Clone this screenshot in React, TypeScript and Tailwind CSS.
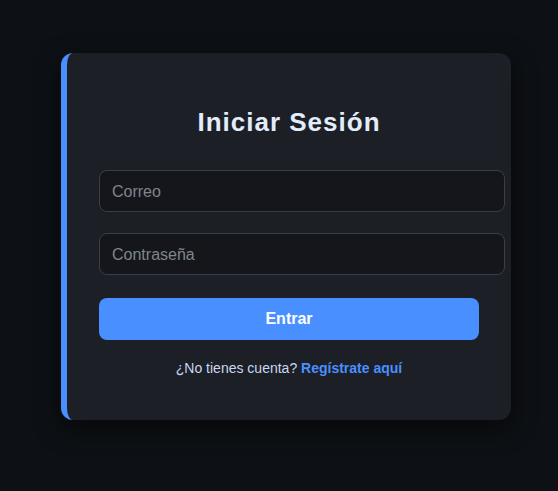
import { useState } from "react";

const Login = () => {
  const [email, setEmail] = useState("");
  const [password, setPassword] = useState("");

  return (
    <div className="w-[450px] rounded-xl border-l-[6px] border-[#4a8fff] bg-[#1c1f26] px-8 pt-[54px] pb-[42px] shadow-[0_8px_24px_rgba(0,0,0,0.5)]">
      <h2 className="text-center text-[26px] font-bold leading-[30px] tracking-[1px] text-[#e3ecfa]">
        Iniciar Sesión
      </h2>

      <form
        className="mt-[33px] flex flex-col"
        onSubmit={(e) => e.preventDefault()}
      >
        <input
          type="email"
          placeholder="Correo"
          value={email}
          onChange={(e) => setEmail(e.target.value)}
          className="box-content h-[18px] w-full rounded-lg border border-[#3a3f47] bg-[#14161b] px-3 pt-[12px] pb-[10px] text-base text-[#e6edf3] placeholder-[#80858d] outline-none"
        />
        <input
          type="password"
          placeholder="Contraseña"
          value={password}
          onChange={(e) => setPassword(e.target.value)}
          className="mt-[21px] box-content h-[18px] w-full rounded-lg border border-[#3a3f47] bg-[#14161b] px-3 pt-[12px] pb-[10px] text-base text-[#e6edf3] placeholder-[#80858d] outline-none"
        />
        <button
          type="submit"
          className="mt-[23px] h-[42px] w-full rounded-lg bg-[#4a8fff] text-base font-bold text-white"
        >
          Entrar
        </button>
      </form>

      <p className="mt-[18px] text-center text-sm leading-5 text-[#c9d8f0]">
        ¿No tienes cuenta?{" "}
        <a href="#" className="font-bold text-[#4a8fff]">
          Regístrate aquí
        </a>
      </p>
    </div>
  );
}

export default function App() {
  return (
    <div
      className="min-h-[491px] bg-[#0d1014] pl-[61px] pt-[53px]"
      style={{ fontFamily: '"Liberation Sans", Arial, sans-serif' }}
    >
      <Login />
    </div>
  );
}
